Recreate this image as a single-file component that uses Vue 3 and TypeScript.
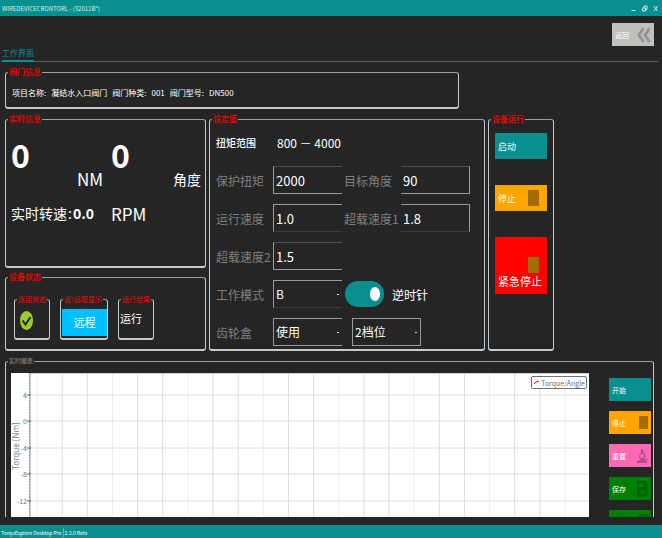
<script setup lang="ts">
import { ref } from 'vue'

const project = [
  { label: '项目名称:', value: '凝结水入口阀门' },
  { label: '阀门种类:', value: '001' },
  { label: '阀门型号:', value: 'DN500' },
]

const protectTorque = ref('2000')
const targetAngle = ref('90')
const runSpeed = ref('1.0')
const overSpeed1 = ref('1.8')
const overSpeed2 = ref('1.5')
const mode = ref('B')
const gearbox = ref('使用')
const gear = ref('2档位')
const reverse = ref(true)

const columns = Array.from({ length: 22 }, (_, i) => `${4.5 + i * 4.35}%`)
const rows = [
  { y: 22, text: '4' },
  { y: 48, text: '0' },
  { y: 75, text: '-4' },
  { y: 101, text: '-8' },
  { y: 128, text: '-12' },
]
const minorTicks = Array.from({ length: 55 }, (_, i) => 1 + i * 3)
</script>

<template>
  <div class="window">
    <header class="titlebar">
      <span>WIREDEVICECRONTORL - (32011B*)</span>
      <div class="window-buttons">
        <button type="button" aria-label="最小化">
          <svg viewBox="0 0 7 7"><path d="M1.5 5.5h4" /></svg>
        </button>
        <button type="button" aria-label="还原">
          <svg viewBox="0 0 7 7"><path d="M1.5 3h3v3h-3zM3 3V1h3v3.5H4.5" /></svg>
        </button>
        <button type="button" aria-label="关闭">
          <svg viewBox="0 0 7 7"><path d="M2 1l3.5 5M5.500 1L2 6" /></svg>
        </button>
      </div>
    </header>

    <div class="toolbar">
      <button type="button" class="back">
        <span>返回</span>
        <svg viewBox="0 0 14 16"><path d="M6.500 1L2 8l4.500 7M12.500 1L8 8l4.500 7" /></svg>
      </button>
    </div>

    <nav class="tabs"><a href="#work" class="tab">工作界面</a></nav>

    <main id="work" class="content">
      <fieldset class="group project">
        <legend>阀门信息</legend>
        <div class="project-line">
          <template v-for="item in project" :key="item.label">
            <span>{{ item.label }}</span><span>{{ item.value }}</span>
          </template>
        </div>
      </fieldset>

      <div class="panels">
        <div class="left">
          <fieldset class="group">
            <legend>实时信息</legend>
            <div class="live">
              <strong class="big">0</strong>
              <span class="unit low">NM</span>
              <strong class="big">0</strong>
              <span class="angle low">角度</span>
              <div class="speed">实时转速<span>:</span><strong>0.0</strong></div>
              <span class="unit rpm">RPM</span>
            </div>
          </fieldset>
          <fieldset class="group">
            <legend>设备状态</legend>
            <div class="states">
              <fieldset class="group state">
                <legend>连接状态</legend>
                <svg class="ok" viewBox="0 0 13 19">
                  <ellipse cx="6.500" cy="9.500" rx="6.500" ry="9.500" />
                  <path d="M2.500 9.500l3 4 5-7.500" />
                </svg>
              </fieldset>
              <fieldset class="group state wide">
                <legend>近\远程显示</legend>
                <div class="remote">远程</div>
              </fieldset>
              <fieldset class="group state">
                <legend>运行结果</legend>
                <div class="running">运行</div>
              </fieldset>
            </div>
          </fieldset>
        </div>

        <fieldset class="group">
          <legend>设定值</legend>
          <div class="settings">
            <div class="row range"><span class="name">扭矩范围</span><span>800 － 4000</span></div>
            <div class="row">
              <label for="torque">保护扭矩</label>
              <input id="torque" v-model="protectTorque" type="text" class="field open-right dim-top" />
              <label for="angle" class="second">目标角度</label>
              <input id="angle" v-model="targetAngle" type="text" class="field open-left dim-top" />
            </div>
            <div class="row">
              <label for="speed">运行速度</label>
              <input id="speed" v-model="runSpeed" type="text" class="field open-right dim-bottom" />
              <label for="over1" class="second">超载速度1</label>
              <input id="over1" v-model="overSpeed1" type="text" class="field open-left dim-bottom" />
            </div>
            <div class="row">
              <label for="over2">超载速度2</label>
              <input id="over2" v-model="overSpeed2" type="text" class="field open-right dim-top" />
            </div>
            <div class="row">
              <label for="mode">工作模式</label>
              <select id="mode" v-model="mode" class="field open-right dim-bottom">
                <option>A</option>
                <option>B</option>
              </select>
              <input id="direction" v-model="reverse" type="checkbox" class="switch" />
              <label for="direction" class="direction">逆时针</label>
            </div>
            <div class="row">
              <label for="gearbox">齿轮盒</label>
              <select id="gearbox" v-model="gearbox" class="field open-right">
                <option>使用</option>
                <option>不使用</option>
              </select>
              <select v-model="gear" class="field gear" aria-label="档位">
                <option>1档位</option>
                <option>2档位</option>
              </select>
            </div>
          </div>
        </fieldset>

        <fieldset class="group">
          <legend>设备运行</legend>
          <div class="run">
            <button type="button" class="teal">启动</button>
            <button type="button" class="orange">停止<i class="block"></i></button>
            <button type="button" class="emergency"><i class="block"></i><span>紧急停止</span></button>
          </div>
        </fieldset>
      </div>

      <fieldset class="group chart-group">
        <legend>实时图表</legend>
        <div class="chart-row">
          <div class="chart">
            <svg class="plot" role="img" aria-label="Torque/Angle">
              <g class="grid">
                <line v-for="(x, i) in columns" :key="x" :x1="x" :x2="x" y1="0" y2="100%" :class="{ faint: i % 3 === 0 }" />
                <line v-for="r in rows" :key="r.y" x1="19" x2="100%" :y1="r.y" :y2="r.y" />
              </g>
              <rect class="margin" x="0" y="0" width="19" height="100%" />
              <line class="axis" x1="19" x2="19" y1="0" y2="100%" />
              <line class="axis" x1="19" x2="100%" y1="0" y2="0" />
              <line v-for="y in minorTicks" :key="y" class="tick" x1="18" x2="19" :y1="y" :y2="y" />
              <g v-for="r in rows" :key="r.text">
                <line class="tick" x1="16" x2="20" :y1="r.y" :y2="r.y" />
                <text class="tick-text" x="16" :y="r.y + 3" text-anchor="end">{{ r.text }}</text>
              </g>
              <text class="axis-title" transform="translate(8 73) rotate(-90)" text-anchor="middle">Torque [Nm]</text>
            </svg>
            <div class="key">
              <svg viewBox="0 0 7 5"><path d="M1 4l2-2M3 2l3-1" /></svg>
              <span>Torque/Angle</span>
            </div>
          </div>
          <div class="actions">
            <button type="button" class="teal">开始</button>
            <button type="button" class="orange">停止<i class="block"></i></button>
            <button type="button" class="pink">
              重置
              <svg viewBox="0 0 12 14">
                <path d="M5 0h2v3l2 2a3.500 3.500 0 0 1-1 5h4v1H8l3 1v2H1v-2l4-1a4 4 0 0 1-1-6l1-1zM6 5a2 2 0 1 0 .1 0z" fill="#b44a80" fill-rule="evenodd" />
              </svg>
            </button>
            <button type="button" class="green">
              保存
              <svg viewBox="0 0 12 16"><path d="M2 0h7l3 3v12a1 1 0 0 1-1 1H2a1 1 0 0 1-1-1V1zM3 2v4h5V2zM6.500 8.500a2 2.500 0 1 0 .1 0z" fill="#006400" fill-rule="evenodd" /></svg>
            </button>
            <button type="button" class="green">
              导出CSV
              <svg viewBox="0 0 12 16"><path d="M2 0h7l3 3v12a1 1 0 0 1-1 1H2a1 1 0 0 1-1-1V1zM3 2v4h5V2z" fill="#006400" fill-rule="evenodd" /></svg>
            </button>
          </div>
        </div>
      </fieldset>
    </main>

    <footer class="statusbar"><span>TorquExplore Desktop Pro</span><span>2.3.0 Beta</span></footer>
  </div>
</template>

<style>
body {
  background: #252525;
}
</style>

<style scoped>
* {
  box-sizing: border-box;
}
.window {
  display: flex;
  flex-direction: column;
  height: 100vh;
  overflow: hidden;
  background: #252525;
  color: #fff;
  font-family: 'Noto Sans CJK SC', 'Noto Sans', sans-serif;
  font-size: 12px;
}
button,
input,
select {
  margin: 0;
  padding: 0;
  border: 0;
  border-radius: 0;
  background: none;
  color: inherit;
  font: inherit;
}
.titlebar {
  display: flex;
  flex: none;
  align-items: center;
  justify-content: space-between;
  height: 16px;
  padding: 0 3px 0 2px;
  background: #0a8f8f;
  color: #d5f0f0;
  font-size: 6px;
}
.window-buttons {
  display: flex;
  gap: 4px;
}
.window-buttons button {
  display: flex;
}
.window-buttons svg {
  width: 7px;
  height: 7px;
  fill: none;
  stroke: #c5eaea;
  stroke-width: 1;
}
.toolbar {
  display: flex;
  flex: none;
  justify-content: flex-end;
  padding: 7px 8px 0;
}
.back {
  display: flex;
  align-items: center;
  justify-content: space-between;
  width: 42px;
  height: 23px;
  padding: 0 3px;
  background: #c0c0c0;
  font-size: 7px;
}
.back svg {
  width: 14px;
  height: 16px;
  fill: none;
  stroke: #949494;
  stroke-width: 3;
}
.tabs {
  display: flex;
  flex: none;
  height: 16px;
  margin: 0 4px 0 2px;
  border-bottom: 1px solid #606060;
}
.tab {
  width: 32px;
  height: 16px;
  border-bottom: 2px solid #0a8f8f;
  color: #0a8f8f;
  font-size: 8px;
  line-height: 13px;
  text-align: center;
  text-decoration: none;
  white-space: nowrap;
}
.content {
  flex: 1;
  min-height: 0;
  overflow: hidden;
  margin-bottom: 8px;
  padding: 4px 8px 0 5px;
}
.group {
  min-width: 0;
  margin: 0;
  padding: 0;
  border: 1px solid #c3cbd0;
  border-top-color: #9a9fa2;
  border-bottom: 2px solid #c3cbd0;
  border-radius: 3px;
}
.group > legend {
  margin-left: 2px;
  padding: 0 1px;
  color: #f00;
  font-size: 8px;
  font-weight: 500;
  line-height: 12px;
}
.project {
  width: 70%;
  height: 43px;
}
.project-line {
  display: flex;
  gap: 5px;
  padding: 8px 6px 0;
  font-size: 8px;
  line-height: 13px;
  white-space: nowrap;
}
.panels {
  display: grid;
  grid-template-columns: 201fr 276fr 66fr 97fr;
  gap: 3px;
  height: 238px;
  margin-top: 4px;
}
.left {
  display: grid;
  grid-template-rows: 155px 1fr;
  gap: 3px;
}
.live {
  display: grid;
  grid-template-columns: 66px 34px 62px 28px;
  grid-template-rows: 68px 40px;
  padding: 0 5px;
  white-space: nowrap;
}
.big {
  padding-top: 9px;
  font-size: 32px;
  line-height: 40px;
}
.low {
  align-self: end;
  line-height: 28px;
}
.unit {
  font-size: 17px;
}
.angle {
  font-size: 14px;
}
.speed {
  display: flex;
  grid-column: span 2;
  align-items: center;
  font-size: 14px;
}
.speed span {
  padding: 0 1px;
}
.speed strong {
  font-size: 14px;
}
.rpm {
  grid-column: span 2;
  align-self: center;
}
.states {
  display: flex;
  gap: 10px;
  padding: 11px 8px 0;
}
.state {
  width: 36px;
  height: 46px;
}
.state > legend {
  font-size: 7px;
  font-weight: 400;
  line-height: 10px;
  white-space: nowrap;
}
.wide {
  width: 48px;
}
.ok {
  display: block;
  width: 13px;
  height: 19px;
  margin: 7px 0 0 5px;
}
.ok ellipse {
  fill: #9acd32;
}
.ok path {
  fill: none;
  stroke: #252525;
  stroke-width: 2;
}
.remote {
  height: 27px;
  margin: 5px 0 0 1px;
  background: #00bfff;
  font-size: 11px;
  line-height: 27px;
  text-align: center;
}
.running {
  padding: 5px 1px;
  font-size: 11px;
  line-height: 18px;
}
.settings {
  display: grid;
  gap: 10px;
  padding: 3px 6px 0;
}
.row {
  display: flex;
  align-items: center;
  height: 28px;
  white-space: nowrap;
}
.row label {
  flex: none;
  width: 57px;
  color: #808080;
  font-size: 12px;
}
.row .second {
  width: 59px;
  padding-left: 2px;
}
.range .name {
  width: 61px;
  font-size: 10px;
  font-weight: 500;
}
.field {
  flex: none;
  width: 69px;
  height: 28px;
  padding: 0 2px;
  border: 1px solid #9a9a9a;
  font-size: 13px;
  line-height: 26px;
}
select.field {
  appearance: none;
  background: linear-gradient(#ddd, #ddd) right 3px center / 2px 1px no-repeat;
  font-size: 12px;
}
.field option {
  background: #252525;
}
.open-right {
  border-right: 0;
}
.open-left {
  border-left: 0;
}
.dim-top {
  border-top-color: #505050;
}
.dim-bottom {
  border-bottom-color: #3c3c3c;
}
.gear {
  margin-left: 10px;
}
.switch {
  display: flex;
  flex: none;
  align-items: center;
  justify-content: flex-start;
  width: 39px;
  height: 26px;
  margin-left: 3px;
  padding: 0 4px;
  border-radius: 13px;
  background: #606060;
  appearance: none;
}
.switch::before {
  width: 10px;
  height: 14px;
  border-radius: 50%;
  background: #fff;
  content: '';
}
.switch:checked {
  justify-content: flex-end;
  background: #0a8f8f;
}
.row .direction {
  width: auto;
  margin-left: 8px;
  color: #fff;
}
.run {
  display: grid;
  grid-template-columns: 100%;
  gap: 26px;
  padding: 8px 6px 0;
}
.run button,
.actions button {
  display: flex;
  align-items: center;
  justify-content: space-between;
  height: 26px;
  padding: 0 8px 0 3px;
  font-size: 9px;
  white-space: nowrap;
}
.block {
  width: 11px;
  height: 16px;
  background: #a56c06;
}
.run .teal,
.actions .teal {
  background: #0a8f8f;
}
.run .orange,
.actions .orange {
  background: #ffa500;
}
.run .emergency {
  flex-direction: column;
  align-items: flex-start;
  justify-content: flex-end;
  height: 57px;
  padding-bottom: 5px;
  background: #f00;
  font-size: 11px;
  line-height: 16px;
}
.emergency .block {
  align-self: flex-end;
}
.chart-group {
  height: 200px;
  margin-top: 4px;
}
.chart-group > legend {
  color: #808080;
  font-size: 6px;
}
.chart-row {
  display: flex;
  gap: 20px;
  padding: 6px 2px 0 5px;
}
.chart {
  position: relative;
  flex: 1;
  height: 164px;
  background: #fff;
}
.plot {
  display: block;
  width: 100%;
  height: 100%;
}
.grid line {
  stroke: #dcdcdc;
  stroke-width: 1;
}
.grid .faint {
  stroke: #efefef;
}
.margin {
  fill: #fff;
}
.axis {
  stroke: #a0a0a0;
}
.tick {
  stroke: #606060;
}
.tick-text {
  fill: #707070;
  font-size: 7px;
}
.axis-title {
  fill: #7d8690;
  font-family: 'Noto Sans', sans-serif;
  font-size: 8px;
}
.key {
  position: absolute;
  top: 3px;
  right: 2px;
  display: flex;
  align-items: center;
  gap: 1px;
  height: 13px;
  padding: 0 1px;
  border: 1px solid #707070;
  border-radius: 2px;
  background: #fff;
  color: #707070;
  font-size: 7px;
}
.key svg {
  width: 7px;
  height: 5px;
  fill: none;
  stroke: #f00;
}
.actions {
  display: grid;
  flex: none;
  grid-template-columns: 100%;
  align-content: start;
  gap: 10px;
  width: 42px;
  padding-top: 5px;
}
.actions button {
  height: 23px;
  padding-right: 3px;
  font-size: 7px;
}
.actions .block {
  width: 9px;
  height: 13px;
}
.actions svg {
  flex: none;
  width: 12px;
  height: 16px;
}
.actions .pink {
  background: #ff69b4;
}
.actions .green {
  background: #008000;
}
.statusbar {
  display: flex;
  flex: none;
  align-items: center;
  gap: 1px;
  height: 13px;
  padding: 2px 1px 0;
  background: #0a8f8f;
  font-size: 5px;
  line-height: 9px;
}
.statusbar span + span {
  padding-left: 1px;
  border-left: 1px solid #5cb8b8;
}
</style>
